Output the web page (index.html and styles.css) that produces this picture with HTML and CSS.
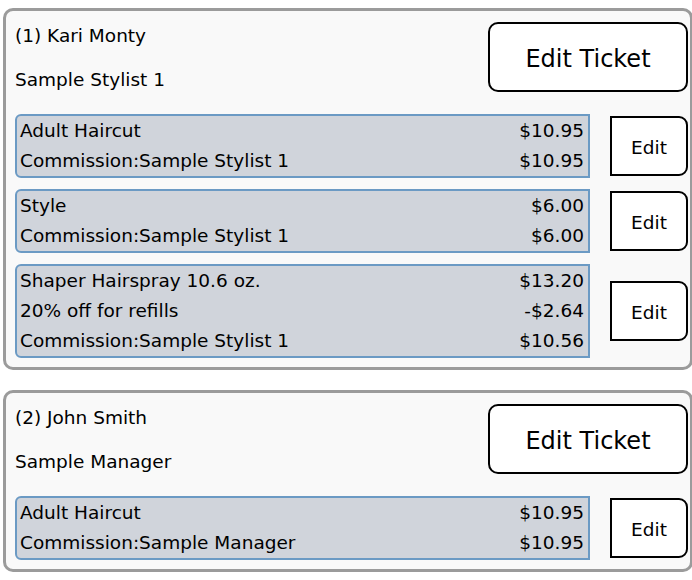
FILE: index.html
```html
<!DOCTYPE html>
<html>
<head>
<meta charset="utf-8">
<link rel="stylesheet" href="styles.css">
</head>
<body>
<div class="card">
  <div class="head">
    <div class="who">
      <div class="line">(1) Kari Monty</div>
      <div class="line">Sample Stylist 1</div>
    </div>
    <button class="ticket">Edit Ticket</button>
  </div>
  <div class="items">
    <div class="item">
      <div class="box">
        <div class="row"><span>Adult Haircut</span><span>$10.95</span></div>
        <div class="row"><span>Commission:Sample Stylist 1</span><span>$10.95</span></div>
      </div>
      <button class="edit">Edit</button>
    </div>
    <div class="item">
      <div class="box">
        <div class="row"><span>Style</span><span>$6.00</span></div>
        <div class="row"><span>Commission:Sample Stylist 1</span><span>$6.00</span></div>
      </div>
      <button class="edit">Edit</button>
    </div>
    <div class="item">
      <div class="box">
        <div class="row"><span>Shaper Hairspray 10.6 oz.</span><span>$13.20</span></div>
        <div class="row"><span>20% off for refills</span><span>-$2.64</span></div>
        <div class="row"><span>Commission:Sample Stylist 1</span><span>$10.56</span></div>
      </div>
      <button class="edit">Edit</button>
    </div>
  </div>
</div>
<div class="card">
  <div class="head">
    <div class="who">
      <div class="line">(2) John Smith</div>
      <div class="line">Sample Manager</div>
    </div>
    <button class="ticket">Edit Ticket</button>
  </div>
  <div class="items">
    <div class="item">
      <div class="box">
        <div class="row"><span>Adult Haircut</span><span>$10.95</span></div>
        <div class="row"><span>Commission:Sample Manager</span><span>$10.95</span></div>
      </div>
      <button class="edit">Edit</button>
    </div>
  </div>
</div>
</body>
</html>
```
FILE: styles.css
```css
html, body {
  margin: 0;
  padding: 0;
  background: #ffffff;
  overflow: hidden;
}
body {
  padding-top: 8px;
  font-family: "DejaVu Sans", sans-serif;
  color: #000;
}
.card {
  box-sizing: border-box;
  width: 690px;
  margin: 0 0 20px 3px;
  border: 3px solid #9b9b9b;
  border-radius: 10px;
  background: #f9f9f9;
  padding: 11px 2px 9px 9px;
}
.head {
  display: flex;
  justify-content: space-between;
  align-items: flex-start;
}
.who {
  padding-top: 2px;
  display: flex;
  flex-direction: column;
  gap: 20px;
}
.line {
  font-size: 18.5px;
  line-height: 24px;
}
.ticket {
  box-sizing: border-box;
  width: 200px;
  height: 70px;
  border: 2px solid #000;
  border-radius: 10px;
  background: #fff;
  font-family: inherit;
  font-size: 24px;
  color: #000;
  padding: 4px 0 0 0;
}
.items {
  margin-top: 22px;
  display: flex;
  flex-direction: column;
  gap: 11px;
}
.item {
  display: flex;
  align-items: center;
  gap: 20px;
}
.box {
  box-sizing: border-box;
  width: 575px;
  border: 2px solid #6b9ac4;
  border-radius: 6px 0 0 6px;
  background: #d0d4db;
  padding: 0 4px 0 3px;
}
.row {
  display: flex;
  justify-content: space-between;
  font-size: 18.5px;
  line-height: 30px;
}
.edit {
  box-sizing: border-box;
  width: 78px;
  height: 60px;
  border: 2px solid #000;
  border-radius: 0 9px 9px 0;
  background: #fff;
  font-family: inherit;
  font-size: 18.5px;
  color: #000;
  padding: 3px 0 0 0;
}
```
